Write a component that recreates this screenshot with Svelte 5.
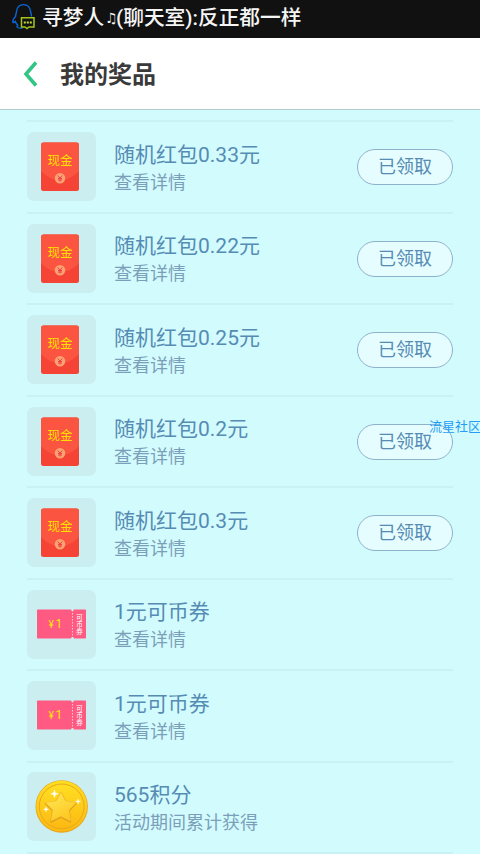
<script lang="ts">
	type Prize = {
		kind: "cash" | "coupon" | "coin";
		title: string;
		note: string;
		claimed?: boolean;
	};

	const prizes: Prize[] = [
		{ kind: "cash", title: "随机红包0.33元", note: "查看详情", claimed: true },
		{ kind: "cash", title: "随机红包0.22元", note: "查看详情", claimed: true },
		{ kind: "cash", title: "随机红包0.25元", note: "查看详情", claimed: true },
		{ kind: "cash", title: "随机红包0.2元", note: "查看详情", claimed: true },
		{ kind: "cash", title: "随机红包0.3元", note: "查看详情", claimed: true },
		{ kind: "coupon", title: "1元可币券", note: "查看详情" },
		{ kind: "coupon", title: "1元可币券", note: "查看详情" },
		{ kind: "coin", title: "565积分", note: "活动期间累计获得" },
	];
</script>

<div class="screen">
	<div class="status">
		<svg class="qq" viewBox="0 0 26 28" width="26" height="28" fill="none">
			<path
				d="M20.500 13.500 C20.500 11 19.800 10.500 19.600 8.500 C19 4 16.500 1.600 12.500 1.600 C8.500 1.600 6 4 5.500 8.500 C5.300 10.500 4.800 11 4.500 13.500 C2.500 15.500 1.500 17.500 2 19.500 C3 19.500 3.800 19 4.300 18.500 C5 20.300 5.800 21.500 6.800 22.300 C5 24 6.500 25.600 11.500 25"
				stroke="#0968d8"
				stroke-width="1.4"
			/>
			<path d="M10.500 14.700 H23 V24 H18 L16 25.500 L14 24 H10.500 Z" fill="#111" stroke="#a5c51c" stroke-width="1.5" />
			<path d="M12.800 19.500 h2 M15.800 19.500 h2 M18.800 19.500 h2" stroke="#c5dc36" stroke-width="1.8" />
		</svg>
		<span class="ticker"><span>寻梦人</span><span class="note-char">♫</span><span>(聊天室):反正都一样</span></span>
	</div>

	<header class="bar">
		<svg class="back" viewBox="0 0 16 26" width="16" height="26" aria-label="返回">
			<path d="M14 1.500 L4 13 L14 24.500" fill="none" stroke="#32c585" stroke-width="3.600" />
		</svg>
		<h1>我的奖品</h1>
	</header>

	<ul class="list">
		{#each prizes as prize}
			<li class="row">
				<div class="thumb">
					{#if prize.kind === "cash"}
						<svg viewBox="0 0 69 69" width="69" height="69">
							<clipPath id="packet"><rect x="14" y="10.500" width="38" height="48.500" rx="2.500" /></clipPath>
							<rect x="14" y="10.500" width="38" height="48.500" rx="2.500" fill="#f54336" />
							<circle cx="33" cy="24" r="24" fill="#fb5541" clip-path="url(#packet)" />
							<text x="33" y="33" font-size="12.500" fill="#ffdf00" text-anchor="middle">现金</text>
							<circle cx="33" cy="46.200" r="5.300" fill="#fba36f" />
							<path d="M30.800 43.500 L33 46.200 L35.200 43.500 M33 46 V49.500 M31 46.500 H35 M31 48 H35" fill="none" stroke="#ef4050" />
						</svg>
					{:else if prize.kind === "coupon"}
						<svg viewBox="0 0 69 69" width="69" height="69">
							<rect x="10" y="19.500" width="49" height="29" rx="0.800" fill="#ff5b82" />
							<path d="M45.500 20 V48" stroke="#ffc3d1" stroke-dasharray="1.500 1.500" />
							<circle cx="45.500" cy="19.800" r="1.300" fill="#cbeef0" />
							<circle cx="45.500" cy="48.200" r="1.300" fill="#cbeef0" />
							<text x="21.500" y="37.500" font-size="10" fill="#ffe800">¥</text>
							<text x="28.500" y="38" font-size="12" fill="#ffe800">1</text>
							<g font-size="6.500" fill="#fff" text-anchor="middle">
								<text x="52.500" y="29.500">可</text>
								<text x="52.500" y="36.500">币</text>
								<text x="52.500" y="43.500">券</text>
							</g>
						</svg>
					{:else}
						<svg viewBox="0 0 69 69" width="69" height="69">
							<defs>
								<linearGradient id="gold" x1="0" y1="0" x2="0" y2="1">
									<stop offset="0" stop-color="#ffdf22" />
									<stop offset="1" stop-color="#fcb912" />
								</linearGradient>
								<linearGradient id="star" x1="0" y1="0" x2="0.6" y2="1">
									<stop offset="0" stop-color="#ffe95c" />
									<stop offset="1" stop-color="#fdc820" />
								</linearGradient>
							</defs>
							<circle cx="34.700" cy="34.500" r="26.200" fill="#e9a51a" />
							<circle cx="34.700" cy="34.200" r="25.400" fill="url(#gold)" />
							<circle cx="34.700" cy="34.400" r="22.400" fill="url(#gold)" stroke="#eba71c" />
							<path
								d="M34 21.500 L38.200 29.600 L48.800 31.300 L41.800 38.600 L43.200 49.500 L34 44.800 L24.300 49.500 L26 38.600 L18.800 31.300 L29.600 29.600 Z"
								fill="none"
								stroke="#e2a01b"
								stroke-width="2.200"
								stroke-linejoin="round"
							/>
							<path
								d="M34 20.500 L38.400 29 L49.200 30.600 L41.800 38 L43.400 48.800 L34 44 L24.100 48.800 L26 38 L18.400 30.600 L29.400 29 Z"
								fill="url(#star)"
								stroke="#fcd232"
								stroke-width="0.6"
								stroke-linejoin="round"
							/>
							<path
								d="M27.500 18 l.9 2.900 2.900 .9 -2.900 .9 -.9 2.900 -.9 -2.900 -2.900 -.9 2.900 -.9z M51 27 l.6 1.900 1.900 .6 -1.900 .6 -.6 1.900 -.6 -1.900 -1.900 -.6 1.900 -.6z M19 34.800 l.6 1.900 1.900 .6 -1.900 .6 -.6 1.900 -.6 -1.900 -1.900 -.6 1.900 -.6z"
								fill="#fff"
								stroke="#fff"
								stroke-width="0.4"
							/>
						</svg>
					{/if}
				</div>
				<div class="info">
					<div class="title">{prize.title}</div>
					<div class="note">{prize.note}</div>
				</div>
				{#if prize.claimed}
					<button class="claimed">已领取</button>
				{/if}
			</li>
		{/each}
	</ul>

	<div class="floating">流星社区</div>
</div>

<style>
	:global(body) {
		background: #d2fbfe;
	}

	.screen {
		position: relative;
		box-sizing: border-box;
		width: 480px;
		height: 854px;
		overflow: hidden;
		background: #d2fbfe;
		font-family: Roboto, "Noto Sans CJK SC", sans-serif;
	}

	.status {
		display: flex;
		align-items: flex-start;
		gap: 5px;
		height: 38px;
		padding-left: 11px;
		background: #111;
		color: #f5f5f5;
	}

	.qq {
		margin-top: 3px;
	}

	.ticker {
		display: flex;
		font-size: 20.7px;
		line-height: 37px;
		font-weight: 500;
		white-space: nowrap;
	}

	.note-char {
		width: 12px;
		padding-left: 1px;
		box-sizing: border-box;
		font-size: 14px;
		font-family: "DejaVu Sans", sans-serif;
		font-weight: 400;
	}

	.bar {
		display: flex;
		align-items: center;
		box-sizing: border-box;
		height: 72px;
		padding-left: 22px;
		background: #fff;
		border-bottom: 1px solid #b5cdcf;
	}

	h1 {
		margin: 2px 0 0 22px;
		color: #3a3a3a;
		font-size: 24px;
		line-height: 36px;
		font-weight: 700;
	}

	.list {
		margin: 0;
		padding: 10px 27px 0;
		list-style: none;
	}

	.row {
		display: flex;
		align-items: center;
		box-sizing: border-box;
		height: 91.5px;
		border-top: 2px solid #caf1f4;
	}

	.row:last-child {
		height: 93px;
		border-bottom: 2px solid #caf1f4;
	}

	.thumb {
		width: 69px;
		height: 69px;
		margin-top: -0.5px;
		border-radius: 7px;
		background: #cbeef1;
	}

	.thumb svg {
		display: block;
	}

	.info {
		flex: 1;
		margin-left: 18px;
		padding-top: 3px;
		white-space: nowrap;
	}

	.title {
		color: #568bb3;
		font-size: 21px;
		line-height: 28px;
	}

	.note {
		color: #7c9fb9;
		font-size: 18px;
		line-height: 27px;
	}

	.claimed {
		box-sizing: border-box;
		width: 96px;
		height: 36px;
		margin-top: 0.5px;
		padding: 0;
		border: 1.5px solid #8fb2cc;
		border-radius: 18px;
		background: #e5fdff;
		color: #568bb3;
		font: 18px/34px Roboto, "Noto Sans CJK SC", sans-serif;
	}

	.floating {
		position: absolute;
		top: 417px;
		left: 429px;
		color: #279cf5;
		font-size: 13px;
		line-height: 20px;
		white-space: nowrap;
	}
</style>
